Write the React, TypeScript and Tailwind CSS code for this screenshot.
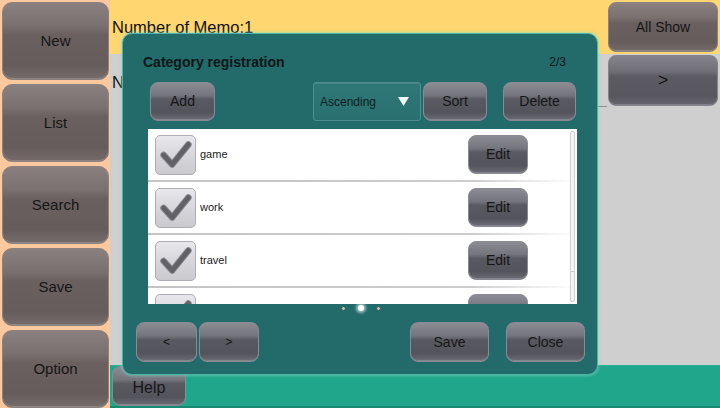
import React from 'react';

// glossy button tones
const tones = {
  side: 'bg-[linear-gradient(180deg,#8a8080_0%,#7a7070_30%,#6a6060_42%,#665c5c_82%,#756b6b_100%)] border-[#8c8282]',
  slate: 'bg-[linear-gradient(180deg,#85838b_0%,#6f6d75_32%,#5c5a62_42%,#58565e_82%,#67656d_100%)] border-[#85838b]',
  dark: 'bg-[linear-gradient(180deg,#8c8c94_0%,#74747c_34%,#595961_44%,#54545c_80%,#6c6c76_100%)] border-[#8a8a94]',
};

interface GlossProps {
  tone?: keyof typeof tones;
  className?: string;
  children: React.ReactNode;
}

const Gloss: React.FC<GlossProps> = ({ tone = 'dark', className = '', children }) => (
  <div
    className={`flex items-center justify-center border text-[#161616] shadow-[inset_0_-1px_0_rgba(255,255,255,0.18)] shrink-0 ${tones[tone]} ${className}`}
  >
    {children}
  </div>
);

const Check = () => (
  <div className="w-[41px] h-[40px] shrink-0 rounded-[5px] border border-[#acacb2] bg-[linear-gradient(180deg,#e8e8ec_0%,#d6d6da_55%,#c9c9ce_100%)] flex items-center justify-center">
    <svg width="41" height="40" viewBox="0 0 41 40">
      <path d="M8 20 L17 30 L34 9" fill="none" stroke="#8a8a90" strokeWidth="7" strokeLinecap="round" strokeLinejoin="round" />
      <path d="M8 20 L17 30 L34 9" fill="none" stroke="#616167" strokeWidth="5" strokeLinecap="round" strokeLinejoin="round" />
    </svg>
  </div>
);

const categories = ['game', 'work', 'travel', ''];

export default function App() {
  return (
    <div className="relative w-[720px] h-[408px] overflow-hidden flex font-['Liberation_Sans',Arial,sans-serif]">
      {/* left menu */}
      <aside className="w-[110px] bg-[#fcc89d] flex flex-col gap-[4px] pt-[2px] px-[2px]">
        {['New', 'List', 'Search', 'Save', 'Option'].map((label) => (
          <Gloss key={label} tone="side" className="h-[78px] w-[107px] rounded-[10px] text-[15px]">
            {label}
          </Gloss>
        ))}
      </aside>

      <main className="flex-1 flex flex-col">
        <div className="flex-1 flex bg-[#cfcfcf]">
          <div className="flex-1 flex flex-col">
            <div className="h-[54px] bg-[#ffd66f] pl-[2px] pt-[17px] text-[16.5px] text-[#101010] leading-[20px]">
              Number of Memo:1
            </div>
            <div className="h-[53px] flex">
              <span className="w-[12px] pl-[2px] pt-[18px] text-[16.5px] text-[#101010] leading-[20px] whitespace-nowrap">
                Number of Category:4
              </span>
              <div className="flex-1 border-b border-[#8f8f8f]" />
            </div>
          </div>
          <div className="w-[113px] flex flex-col">
            <div className="h-[54px] bg-[#ffd66f] pt-[2px] pl-[1px]">
              <Gloss tone="side" className="h-[50px] w-[110px] rounded-[8px] text-[14px]">
                All Show
              </Gloss>
            </div>
            <div className="pt-[1px] pl-[1px]">
              <Gloss tone="slate" className="h-[51px] w-[110px] rounded-[8px] text-[18px]">
                &gt;
              </Gloss>
            </div>
          </div>
        </div>
        <div className="h-[43px] bg-[#20a68a] border-t border-[#27b093] border-b-2 border-b-[#178a72] pl-[2px]">
          <Gloss tone="dark" className="h-[40px] w-[74px] rounded-[8px] text-[16px] pt-[4px]">
            Help
          </Gloss>
        </div>
      </main>

      {/* category dialog */}
      <div className="absolute left-[122px] top-[33px] w-[476px] h-[342px] rounded-[10px] bg-[#236a6b] border border-[#4fb3a6] shadow-[0_0_3px_1px_rgba(120,220,200,0.55)] flex flex-col text-[#111]">
        <div className="mt-[19px] h-[18px] px-[20px] pr-[31px] flex items-center justify-between">
          <span className="text-[14px] font-bold text-[#0d1616]">Category registration</span>
          <span className="text-[12px] text-[#0d1616]">2/3</span>
        </div>

        <div className="mt-[11px] flex items-center pl-[27px]">
          <Gloss className="h-[39px] w-[65px] rounded-[8px] text-[14px]">Add</Gloss>
          <div className="ml-[98px] h-[39px] w-[108px] rounded-[3px] border border-[#4d8f8f] bg-[linear-gradient(180deg,#2f7777_0%,#2a7070_100%)] shadow-[inset_0_1px_0_rgba(255,255,255,0.12)] flex items-center justify-between pl-[6px] pr-[11px]">
            <span className="text-[12px] text-[#0f1e1e]">Ascending</span>
            <svg width="11" height="9" viewBox="0 0 11 9">
              <path d="M0 0 L11 0 L5.5 9 Z" fill="#f4f8f8" />
            </svg>
          </div>
          <Gloss className="ml-[2px] h-[39px] w-[64px] rounded-[8px] text-[14px]">Sort</Gloss>
          <Gloss className="ml-[16px] h-[39px] w-[73px] rounded-[8px] text-[14px]">Delete</Gloss>
        </div>

        <div className="relative mt-[8px] ml-[25px] w-[429px] h-[175px] bg-white overflow-hidden">
          {categories.map((name, i) => (
            <div key={i} className="h-[53px] flex flex-col">
              <div className="h-[51px] flex items-center pl-[7px] pr-[49px]">
                <Check />
                <span className="ml-[4px] flex-1 text-[11px] text-[#222]">{name}</span>
                {name && <Gloss className="h-[39px] w-[60px] rounded-[8px] text-[14px]">Edit</Gloss>}
                {!name && <div className="h-[39px] w-[60px] rounded-[8px] border border-[#8a8a94] bg-[linear-gradient(180deg,#8c8c94_0%,#74747c_34%,#595961_44%)]" />}
              </div>
              <div className="h-[2px] bg-[linear-gradient(90deg,#c4c4c4_0%,#cdcdcd_75%,#ffffff_100%)]" />
            </div>
          ))}
          <div className="absolute right-[2px] top-[2px] bottom-[2px] w-[5px] rounded-[2px] border border-[#cfcfcf] bg-[#f4f4f4] flex flex-col">
            <div className="h-[140px] border-b border-[#cfcfcf]" />
          </div>
        </div>

        <div className="mt-[1px] h-[6px] flex items-center justify-center gap-[12px] pl-[2px]">
          <span className="w-[5px] h-[5px] rounded-full bg-[#b8c4c4] border border-[#3e5656]" />
          <span className="w-[6px] h-[6px] rounded-full bg-white shadow-[0_0_3px_2px_rgba(255,255,255,0.6)]" />
          <span className="w-[5px] h-[5px] rounded-full bg-[#b8c4c4] border border-[#3e5656]" />
        </div>

        <div className="mt-[11px] flex items-center pl-[13px] pr-[12px]">
          <Gloss className="h-[40px] w-[61px] rounded-[8px] text-[12px]">&lt;</Gloss>
          <Gloss className="ml-[2px] h-[40px] w-[60px] rounded-[8px] text-[12px]">&gt;</Gloss>
          <div className="flex-1" />
          <Gloss className="h-[40px] w-[79px] rounded-[8px] text-[14px]">Save</Gloss>
          <Gloss className="ml-[17px] h-[40px] w-[79px] rounded-[8px] text-[14px]">Close</Gloss>
        </div>
      </div>
    </div>
  );
}
